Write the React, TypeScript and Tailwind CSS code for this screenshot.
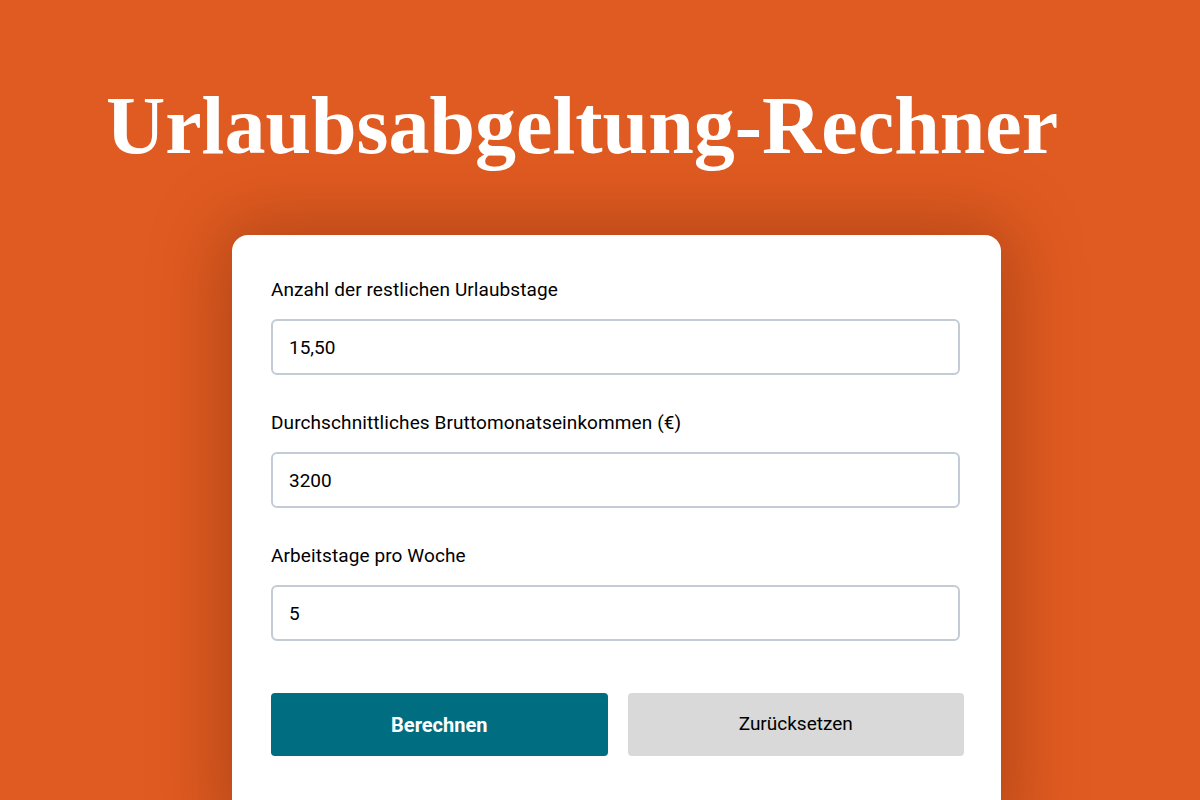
import { useState } from 'react'

const FIELDS = [
  { label: 'Anzahl der restlichen Urlaubstage', value: '15,50' },
  { label: 'Durchschnittliches Bruttomonatseinkommen (€)', value: '3200' },
  { label: 'Arbeitstage pro Woche', value: '5' },
]

export default function App() {
  const [values, setValues] = useState(FIELDS.map((f) => f.value))

  return (
    <div className="h-[800px] w-[1200px] overflow-hidden bg-[#e05b21] font-['Roboto',sans-serif]">
      <h1 className="pl-[106px] pt-[78px] font-['Liberation_Serif',serif] text-[82px] font-bold leading-[96px] text-white">
        Urlaubsabgeltung-Rechner
      </h1>
      <div className="ml-[232px] mt-[61px] w-[769px] rounded-2xl bg-white pb-20 pl-[39px] pt-[43px] shadow-[0_0_70px_10px_rgba(90,30,0,0.35)]">
        <div className="flex flex-col gap-9">
          {FIELDS.map((f, i) => (
            <div key={f.label} className="flex flex-col gap-[17px]">
              <label className="text-[19px] leading-6 tracking-[0.1px] text-black">{f.label}</label>
              <input
                value={values[i]}
                onChange={(e) => setValues(values.map((v, j) => (j === i ? e.target.value : v)))}
                className="h-14 w-[689px] rounded-md border-2 border-[#c3cbd5] px-4 text-[19px] text-black outline-none"
              />
            </div>
          ))}
        </div>
        <div className="mt-[52px] grid w-[693px] grid-cols-2 gap-5">
          <button className="h-[63px] rounded bg-[#006e80] text-[20px] font-bold text-white">Berechnen</button>
          <button
            onClick={() => setValues(FIELDS.map(() => ''))}
            className="h-[63px] rounded bg-[#d9d9d9] text-[19px] text-black"
          >
            Zurücksetzen
          </button>
        </div>
      </div>
    </div>
  )
}
